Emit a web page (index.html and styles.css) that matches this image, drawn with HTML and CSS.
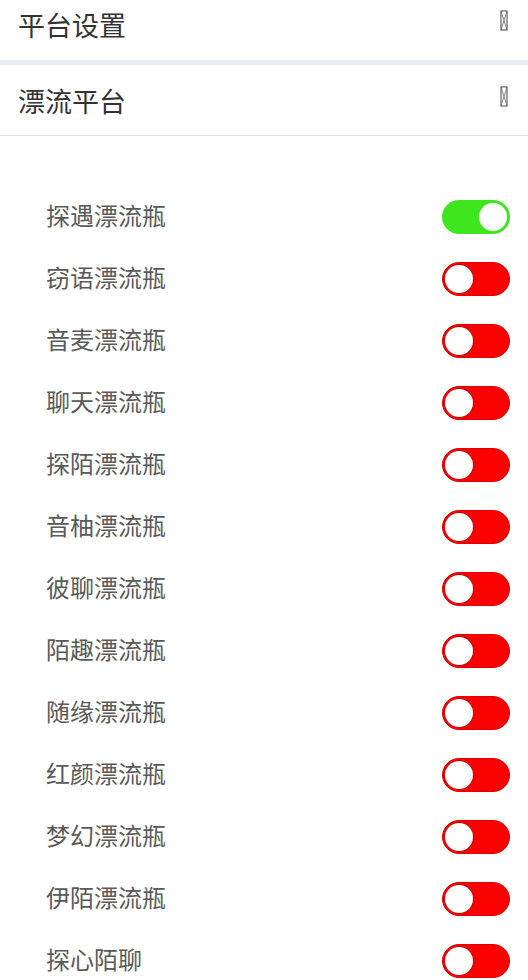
FILE: index.html
```html
<!DOCTYPE html>
<html lang="zh-CN">
<head>
<meta charset="utf-8">
<title>平台设置</title>
<link rel="stylesheet" href="styles.css">
</head>
<body>
<div class="page">
  <div class="head head-first">
    <span class="head-title">平台设置</span>
    <svg class="tofu" width="8" height="21" viewBox="0 0 8 21"><rect x="1" y="1" width="6" height="19" fill="none" stroke="#444" stroke-width="1"/><path d="M1 1 L7 20 M7 1 L1 20" stroke="#666" stroke-width="0.8" fill="none"/></svg>
  </div>
  <div class="band"></div>
  <div class="head head-second">
    <span class="head-title">漂流平台</span>
    <svg class="tofu" width="8" height="21" viewBox="0 0 8 21"><rect x="1" y="1" width="6" height="19" fill="none" stroke="#444" stroke-width="1"/><path d="M1 1 L7 20 M7 1 L1 20" stroke="#666" stroke-width="0.8" fill="none"/></svg>
  </div>
  <ul class="list">
    <li class="item"><span class="label">探遇漂流瓶</span><span class="switch on"><span class="knob"></span></span></li>
    <li class="item"><span class="label">窃语漂流瓶</span><span class="switch off"><span class="knob"></span></span></li>
    <li class="item"><span class="label">音麦漂流瓶</span><span class="switch off"><span class="knob"></span></span></li>
    <li class="item"><span class="label">聊天漂流瓶</span><span class="switch off"><span class="knob"></span></span></li>
    <li class="item"><span class="label">探陌漂流瓶</span><span class="switch off"><span class="knob"></span></span></li>
    <li class="item"><span class="label">音柚漂流瓶</span><span class="switch off"><span class="knob"></span></span></li>
    <li class="item"><span class="label">彼聊漂流瓶</span><span class="switch off"><span class="knob"></span></span></li>
    <li class="item"><span class="label">陌趣漂流瓶</span><span class="switch off"><span class="knob"></span></span></li>
    <li class="item"><span class="label">随缘漂流瓶</span><span class="switch off"><span class="knob"></span></span></li>
    <li class="item"><span class="label">红颜漂流瓶</span><span class="switch off"><span class="knob"></span></span></li>
    <li class="item"><span class="label">梦幻漂流瓶</span><span class="switch off"><span class="knob"></span></span></li>
    <li class="item"><span class="label">伊陌漂流瓶</span><span class="switch off"><span class="knob"></span></span></li>
    <li class="item"><span class="label">探心陌聊</span><span class="switch off"><span class="knob"></span></span></li>
  </ul>
</div>
</body>
</html>
```

FILE: styles.css
```css
* { box-sizing: border-box; }
html, body {
  margin: 0;
  padding: 0;
  background: #ffffff;
  font-family: "Noto Sans CJK SC", "Noto Sans", sans-serif;
}
.page {
  width: 528px;
  height: 980px;
  overflow: hidden;
}
.head {
  display: flex;
  align-items: center;
  justify-content: space-between;
  padding: 0 20px 0 18px;
  background: #fff;
}
.head-first {
  height: 60px;
  padding-bottom: 12px;
}
.head-second {
  height: 71px;
  border-bottom: 1px solid #e3e3e3;
}
.head-title {
  font-size: 27px;
  color: #333;
  line-height: 1;
}
.tofu {
  display: block;
  margin-top: -8px;
}
.band {
  height: 5px;
  background: #e8eef3;
}
.list {
  list-style: none;
  margin: 0;
  padding: 50px 18px 0 46px;
}
.item {
  height: 62px;
  display: flex;
  align-items: center;
  justify-content: space-between;
}
.label {
  font-size: 24px;
  color: #5a5a5a;
  line-height: 1;
  margin-top: -4px;
}
.switch {
  width: 68px;
  height: 34px;
  border-radius: 17px;
  display: flex;
  align-items: center;
  padding: 0 3px;
}
.switch.on {
  background: #3ee61e;
  justify-content: flex-end;
}
.switch.off {
  background: #fb0000;
  border: 1px solid #e00000;
  justify-content: flex-start;
  padding: 0 2px;
}
.knob {
  width: 28px;
  height: 28px;
  border-radius: 50%;
  background: #fff;
}
.switch.off .knob {
  box-shadow: 0 0 0 1px #d40000;
}
```
